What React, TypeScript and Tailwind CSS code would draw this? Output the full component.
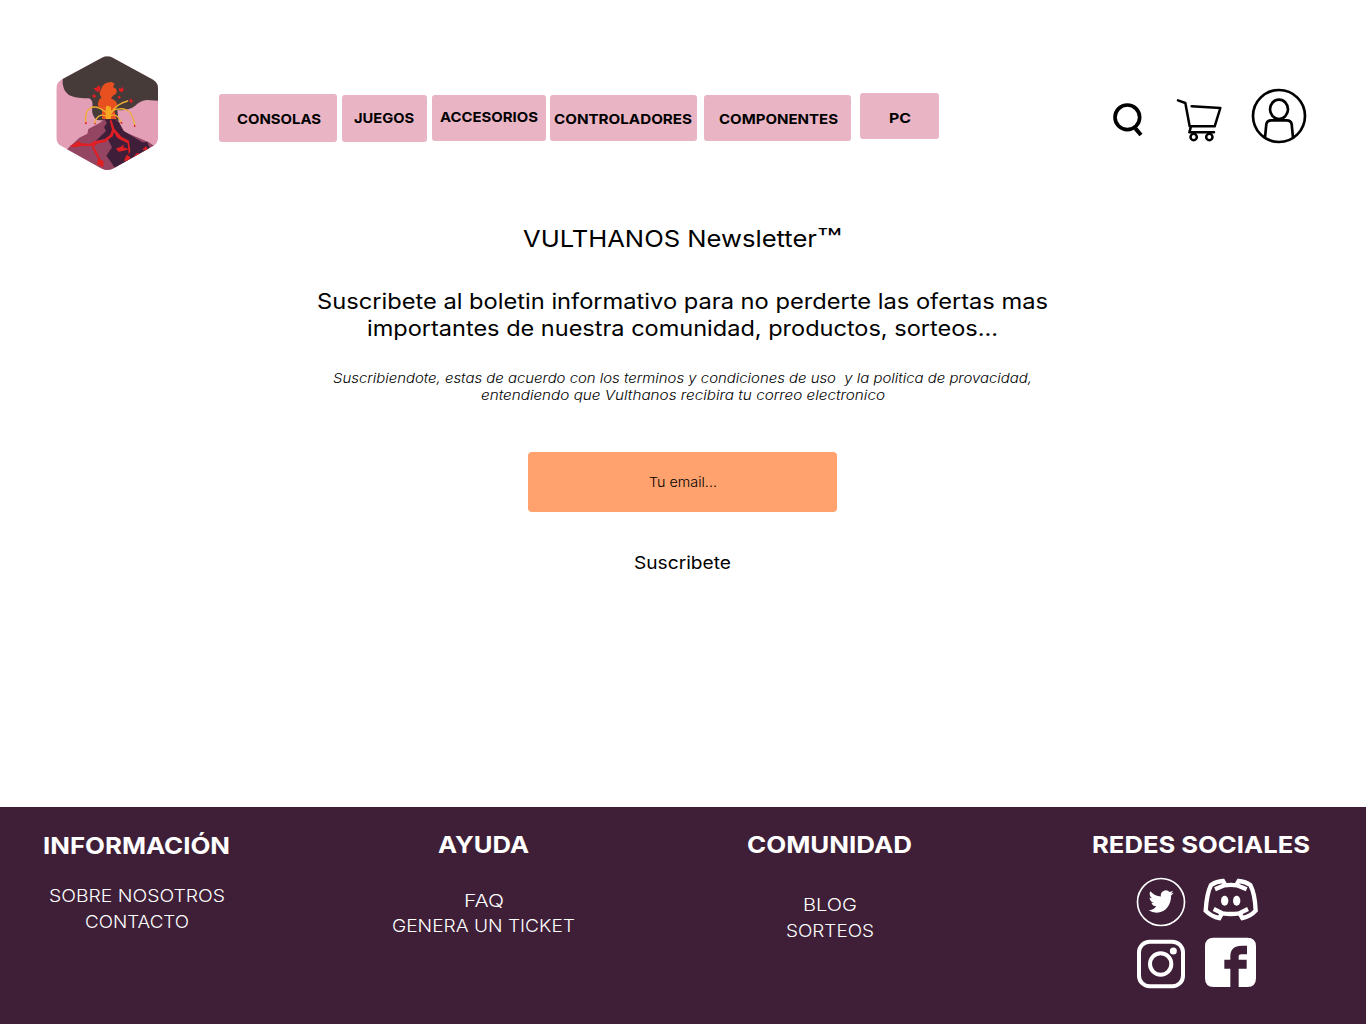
import { useLayoutEffect, useRef, useState } from "react";

/** A single line of text stretched to the width of its box. */
function Line({ children, className = "" }: { children: string; className?: string }) {
  const box = useRef<HTMLSpanElement>(null);
  const text = useRef<HTMLSpanElement>(null);
  const [scale, setScale] = useState(1);
  useLayoutEffect(() => {
    if (box.current && text.current) setScale(box.current.offsetWidth / text.current.getBoundingClientRect().width);
  }, []);
  return (
    <span ref={box} className={`block shrink-0 whitespace-pre ${className}`}>
      <span ref={text} className="inline-block origin-left" style={{ transform: `scaleX(${scale})` }}>
        {children}
      </span>
    </span>
  );
}

const nav = [
  { label: "CONSOLAS", box: "w-[118px] h-[47.5px] mt-[94px] pl-[18px] pt-[15px]", text: "w-[84px]" },
  { label: "JUEGOS", box: "w-[85px] h-[47.5px] mt-[94.5px] ml-[5px] pl-3 pt-[13.5px]", text: "w-[60px]" },
  { label: "ACCESORIOS", box: "w-[114px] h-[46.5px] mt-[94.5px] ml-[5px] pl-2 pt-[12.5px]", text: "w-[98px]" },
  { label: "CONTROLADORES", box: "w-[147px] h-[46px] mt-[94.5px] ml-1 pl-[3.5px] pt-[14.5px]", text: "w-[138px]" },
  { label: "COMPONENTES", box: "w-[147px] h-[46px] mt-[94.5px] ml-[7px] pl-[14.5px] pt-[14.5px]", text: "w-[119px]" },
  { label: "PC", box: "w-[79px] h-[45.5px] mt-[93px] ml-[9px] pl-[29px] pt-[15px]", text: "w-[22px]" },
];

const Logo = () => (
  <svg className="ml-[47px] mt-[50px] h-[125px] w-[120px] shrink-0" viewBox="0 0 360 375">
    <defs>
      <clipPath id="hex">
        <path d="M165 23Q181 15 197 23L318 89Q333 98 333 116V263Q333 279 318 288L197 356Q181 364 165 356L43 288Q28 279 28 263V116Q28 98 43 89Z" />
      </clipPath>
    </defs>
    <g clipPath="url(#hex)">
      <path fill="#e39fb6" d="M0 0H360V375H0Z" />
      <path fill="#463b39" d="M47 70V102Q52 132 75 139Q91 145 126 145Q139 150 136 170Q132 195 149 210L215 214Q213 198 211 180Q245 183 264 168Q280 151 300 150L340 153V0H47Z" />
      <path fill="#944562" d="M60 298L97 263L121 251L124 237L158 219L172 208L209 209L233 246L304 276L340 300V375H60Z" />
      <path fill="#3e1e38" d="M172 208L201 208L216 216L229 242L286 277L301 276L309 296L335 298V330L205 356L190 333L178 317L195 292L181 265L146 273L177 243L171 231L180 219Z" />
      <path fill="#e8501f" d="M165 207V179L154 170Q149 153 164 142Q154 134 161 121Q168 97 188 97Q195 94 203 101L198 111L208 117Q213 132 198 137L192 145L202 151Q216 159 206 173L202 181L208 207Z" />
      <path fill="#f4a91f" d="M176 207V173Q178 166 184 168L192 171V207Z" />
      <g fill="none" stroke="#f0ad35" strokeWidth="4" strokeLinecap="round">
        <path d="M177 187Q149 164 130 174Q113 184 116 215M177 198Q152 188 143 219M193 190Q204 163 242 153M192 196Q211 189 222 217M192 184Q218 171 239 180Q258 190 263 225" />
      </g>
      <g fill="#df1f23">
        <path d="M138 113L147 115L154 106L161 113L157 127L147 123ZM216 114L222 116L228 110L230 122L223 127L216 122ZM134 137L140 135L143 130L144 136L149 138L142 144ZM212 139L218 137L222 142L217 146L213 144ZM246 151L253 145L254 151L260 153L254 157L252 162L250 156ZM67 289L82 281L95 272L102 280L129 281L143 273L170 269L189 255L195 239L188 211L194 211L202 236L224 261L246 272L250 304L245 314L242 280L211 264L201 247L197 259L175 276L150 281L140 290L149 304L160 328L170 334L169 352L149 343L153 326L143 309L134 288L105 288L80 292ZM207 295L220 291L231 283L228 292L246 297L228 303L214 305ZM231 332L239 314L250 321L246 333ZM261 320L268 310L289 309L273 321ZM286 299L296 289L308 302Z" />
        <path d="M114 217h5v5h-5zM142 219h4v4h-4zM221 216h5v5h-5zM261 225h4v6h-4z" />
      </g>
    </g>
  </svg>
);

const HeaderIcons = () => (
  <div className="ml-[161px] mt-20 flex h-[70px] w-[220px]">
    <svg className="h-[70px] w-[65px]" viewBox="0 0 195 210" fill="none" stroke="#000">
      <circle cx="82" cy="112" r="37" strokeWidth="11" />
      <path d="M106 145L123 165" strokeWidth="12" />
    </svg>
    <svg className="h-[70px] w-[70px]" viewBox="195 0 210 210" fill="none" stroke="#000" strokeWidth="7.5" strokeLinejoin="round" strokeLinecap="round">
      <path d="M234 61L256 69L269 139H344L361 84L275 79M272 143L268 157H342" />
      <circle cx="281" cy="171" r="9.5" />
      <circle cx="328" cy="171" r="9.5" />
    </svg>
    <svg className="h-[70px] w-[85px]" viewBox="405 0 255 210" fill="none" stroke="#000" strokeWidth="8">
      <circle cx="537" cy="108" r="78" />
      <ellipse cx="537" cy="88" rx="27" ry="29" />
      <path d="M495 173L499 132Q501 121 514 121H560Q573 121 575 132L579 173" />
    </svg>
  </div>
);

const Twitter = () => (
  <svg className="h-[62px] w-[75px]" viewBox="0 0 225 186" fill="#fff">
    <circle cx="123" cy="96" r="70.5" fill="none" stroke="#fff" strokeWidth="5" />
    <path transform="translate(86 54) scale(3.12)" d="M23.95 4.57a10 10 0 0 1-2.82.77 4.96 4.96 0 0 0 2.16-2.72c-.95.55-2 .95-3.13 1.18a4.92 4.92 0 0 0-8.38 4.48C7.69 8.1 4.07 6.13 1.64 3.16a4.82 4.82 0 0 0-.67 2.48c0 1.71.87 3.21 2.19 4.1a4.9 4.9 0 0 1-2.23-.62v.06a4.92 4.92 0 0 0 3.95 4.83 5 5 0 0 1-2.21.08 4.94 4.94 0 0 0 4.6 3.42A9.87 9.87 0 0 1 0 21.5a14 14 0 0 0 7.55 2.21c9.05 0 14-7.5 14-15.94 0-.21 0-.42-.02-.63a9.94 9.94 0 0 0 2.46-2.55z" />
  </svg>
);

const Discord = () => (
  <svg className="h-[62px] w-[75px]" viewBox="225 0 225 186" fill="none" stroke="#fff" strokeWidth="13">
    <path d="M285 58L313 46Q332 43 351 46L380 58M281 117L308 130Q332 134 357 130L384 117" />
    <path d="M318 48L309 33Q290 34 273 45Q260 71 257 122Q275 140 298 144L307 128M347 48L356 33Q374 34 391 45Q405 71 407 122Q391 140 367 144L358 128" />
    <ellipse cx="314" cy="92" rx="11" ry="15" fill="#fff" stroke="none" />
    <ellipse cx="350" cy="92" rx="11" ry="15" fill="#fff" stroke="none" />
  </svg>
);

const Instagram = () => (
  <svg className="h-[63px] w-[75px]" viewBox="0 186 225 189" fill="none" stroke="#fff" strokeWidth="12">
    <rect x="57" y="215" width="132" height="134" rx="32" />
    <circle cx="122" cy="282" r="32" />
    <circle cx="160" cy="243" r="10.5" fill="#fff" stroke="none" />
  </svg>
);

const Facebook = () => (
  <svg className="h-[63px] w-[75px]" viewBox="225 186 225 189">
    <path fill="#fff" d="M281 203H382Q408 203 408 229V325Q408 351 382 351H356V296H380V269H356V260Q356 253 364 253H381V227H365Q331 227 331 259V269H313V296H331V351H281Q255 351 255 325V229Q255 203 281 203Z" />
  </svg>
);

const heading = "text-[23.4px] font-bold leading-[30px] h-[30px]";
const item = "text-[17.6px] font-light leading-[26px] h-[26px]";

export default function App() {
  return (
    <div className="flex h-[1024px] w-[1366px] flex-col overflow-hidden bg-white font-['Inter',sans-serif] text-black">
      <header className="flex h-[200px] items-start">
        <Logo />
        <nav className="ml-[52px] flex items-start">
          {nav.map((n) => (
            <a key={n.label} className={`block shrink-0 rounded-[3px] bg-[#e9b4c4] ${n.box}`}>
              <Line className={`h-5 text-[13.8px] font-bold leading-5 ${n.text}`}>{n.label}</Line>
            </a>
          ))}
        </nav>
        <HeaderIcons />
      </header>

      <main className="flex h-[607px] flex-col items-center pr-px">
        <h1 className="mt-6 flex h-[30px] font-normal leading-[30px]">
          <Line className="h-[30px] w-[294px] text-[23.5px]">VULTHANOS Newsletter</Line>
          <Line className="h-[30px] w-[25px] text-[28px]">™</Line>
        </h1>
        <div className="mt-[34px] flex flex-col items-center text-[21.3px] font-normal leading-[27px]">
          <Line className="h-[27px] w-[731px]">Suscribete al boletin informativo para no perderte las ofertas mas</Line>
          <Line className="h-[27px] w-[631px]">importantes de nuestra comunidad, productos, sorteos...</Line>
        </div>
        <div className="mt-[28px] flex flex-col items-center text-[13.4px] font-light italic leading-[17px]">
          <Line className="h-[17px] w-[699px]">Suscribiendote, estas de acuerdo con los terminos y condiciones de uso  y la politica de provacidad,</Line>
          <Line className="h-[17px] w-[404px]">entendiendo que Vulthanos recibira tu correo electronico</Line>
        </div>
        <div className="mt-[48px] flex h-[60px] w-[309px] items-center justify-center rounded-[4px] bg-[#ffa26e]">
          <Line className="ml-px h-5 w-[68px] text-[13.6px] font-light leading-5">Tu email...</Line>
        </div>
        <button className="mt-[38px]">
          <Line className="h-[26px] w-[97px] text-left text-[17.6px] font-normal leading-[26px]">Suscribete</Line>
        </button>
      </main>

      <footer className="flex h-[217px] items-start bg-[#3e1f37] text-white">
        <section className="ml-[43px] mt-[24px] flex w-[188px] flex-col items-center">
          <Line className={`-ml-px w-[187px] ${heading}`}>INFORMACIÓN</Line>
          <Line className={`mt-[21.5px] w-[176px] ${item}`}>SOBRE NOSOTROS</Line>
          <Line className={`w-[104px] ${item}`}>CONTACTO</Line>
        </section>
        <section className="ml-[161px] mt-[22.5px] flex w-[183px] flex-col items-center">
          <Line className={`-ml-px w-[91px] ${heading}`}>AYUDA</Line>
          <Line className={`mt-[28px] w-[40px] ${item}`}>FAQ</Line>
          <Line className={`-mt-px w-[183px] ${item}`}>GENERA UN TICKET</Line>
        </section>
        <section className="ml-[172px] mt-[23px] flex w-[166px] flex-col items-center">
          <Line className={`-ml-px w-[165px] ${heading}`}>COMUNIDAD</Line>
          <Line className={`-ml-px mt-[32px] w-[54px] ${item}`}>BLOG</Line>
          <Line className={`-ml-px w-[88px] ${item}`}>SORTEOS</Line>
        </section>
        <section className="ml-[178px] mt-[23px] flex w-[220px] flex-col">
          <Line className={`ml-px w-[218px] ${heading}`}>REDES SOCIALES</Line>
          <div className="ml-[29px] mt-[10px] grid w-[150px] grid-cols-2">
            <Twitter />
            <Discord />
            <Instagram />
            <Facebook />
          </div>
        </section>
      </footer>
    </div>
  );
}
